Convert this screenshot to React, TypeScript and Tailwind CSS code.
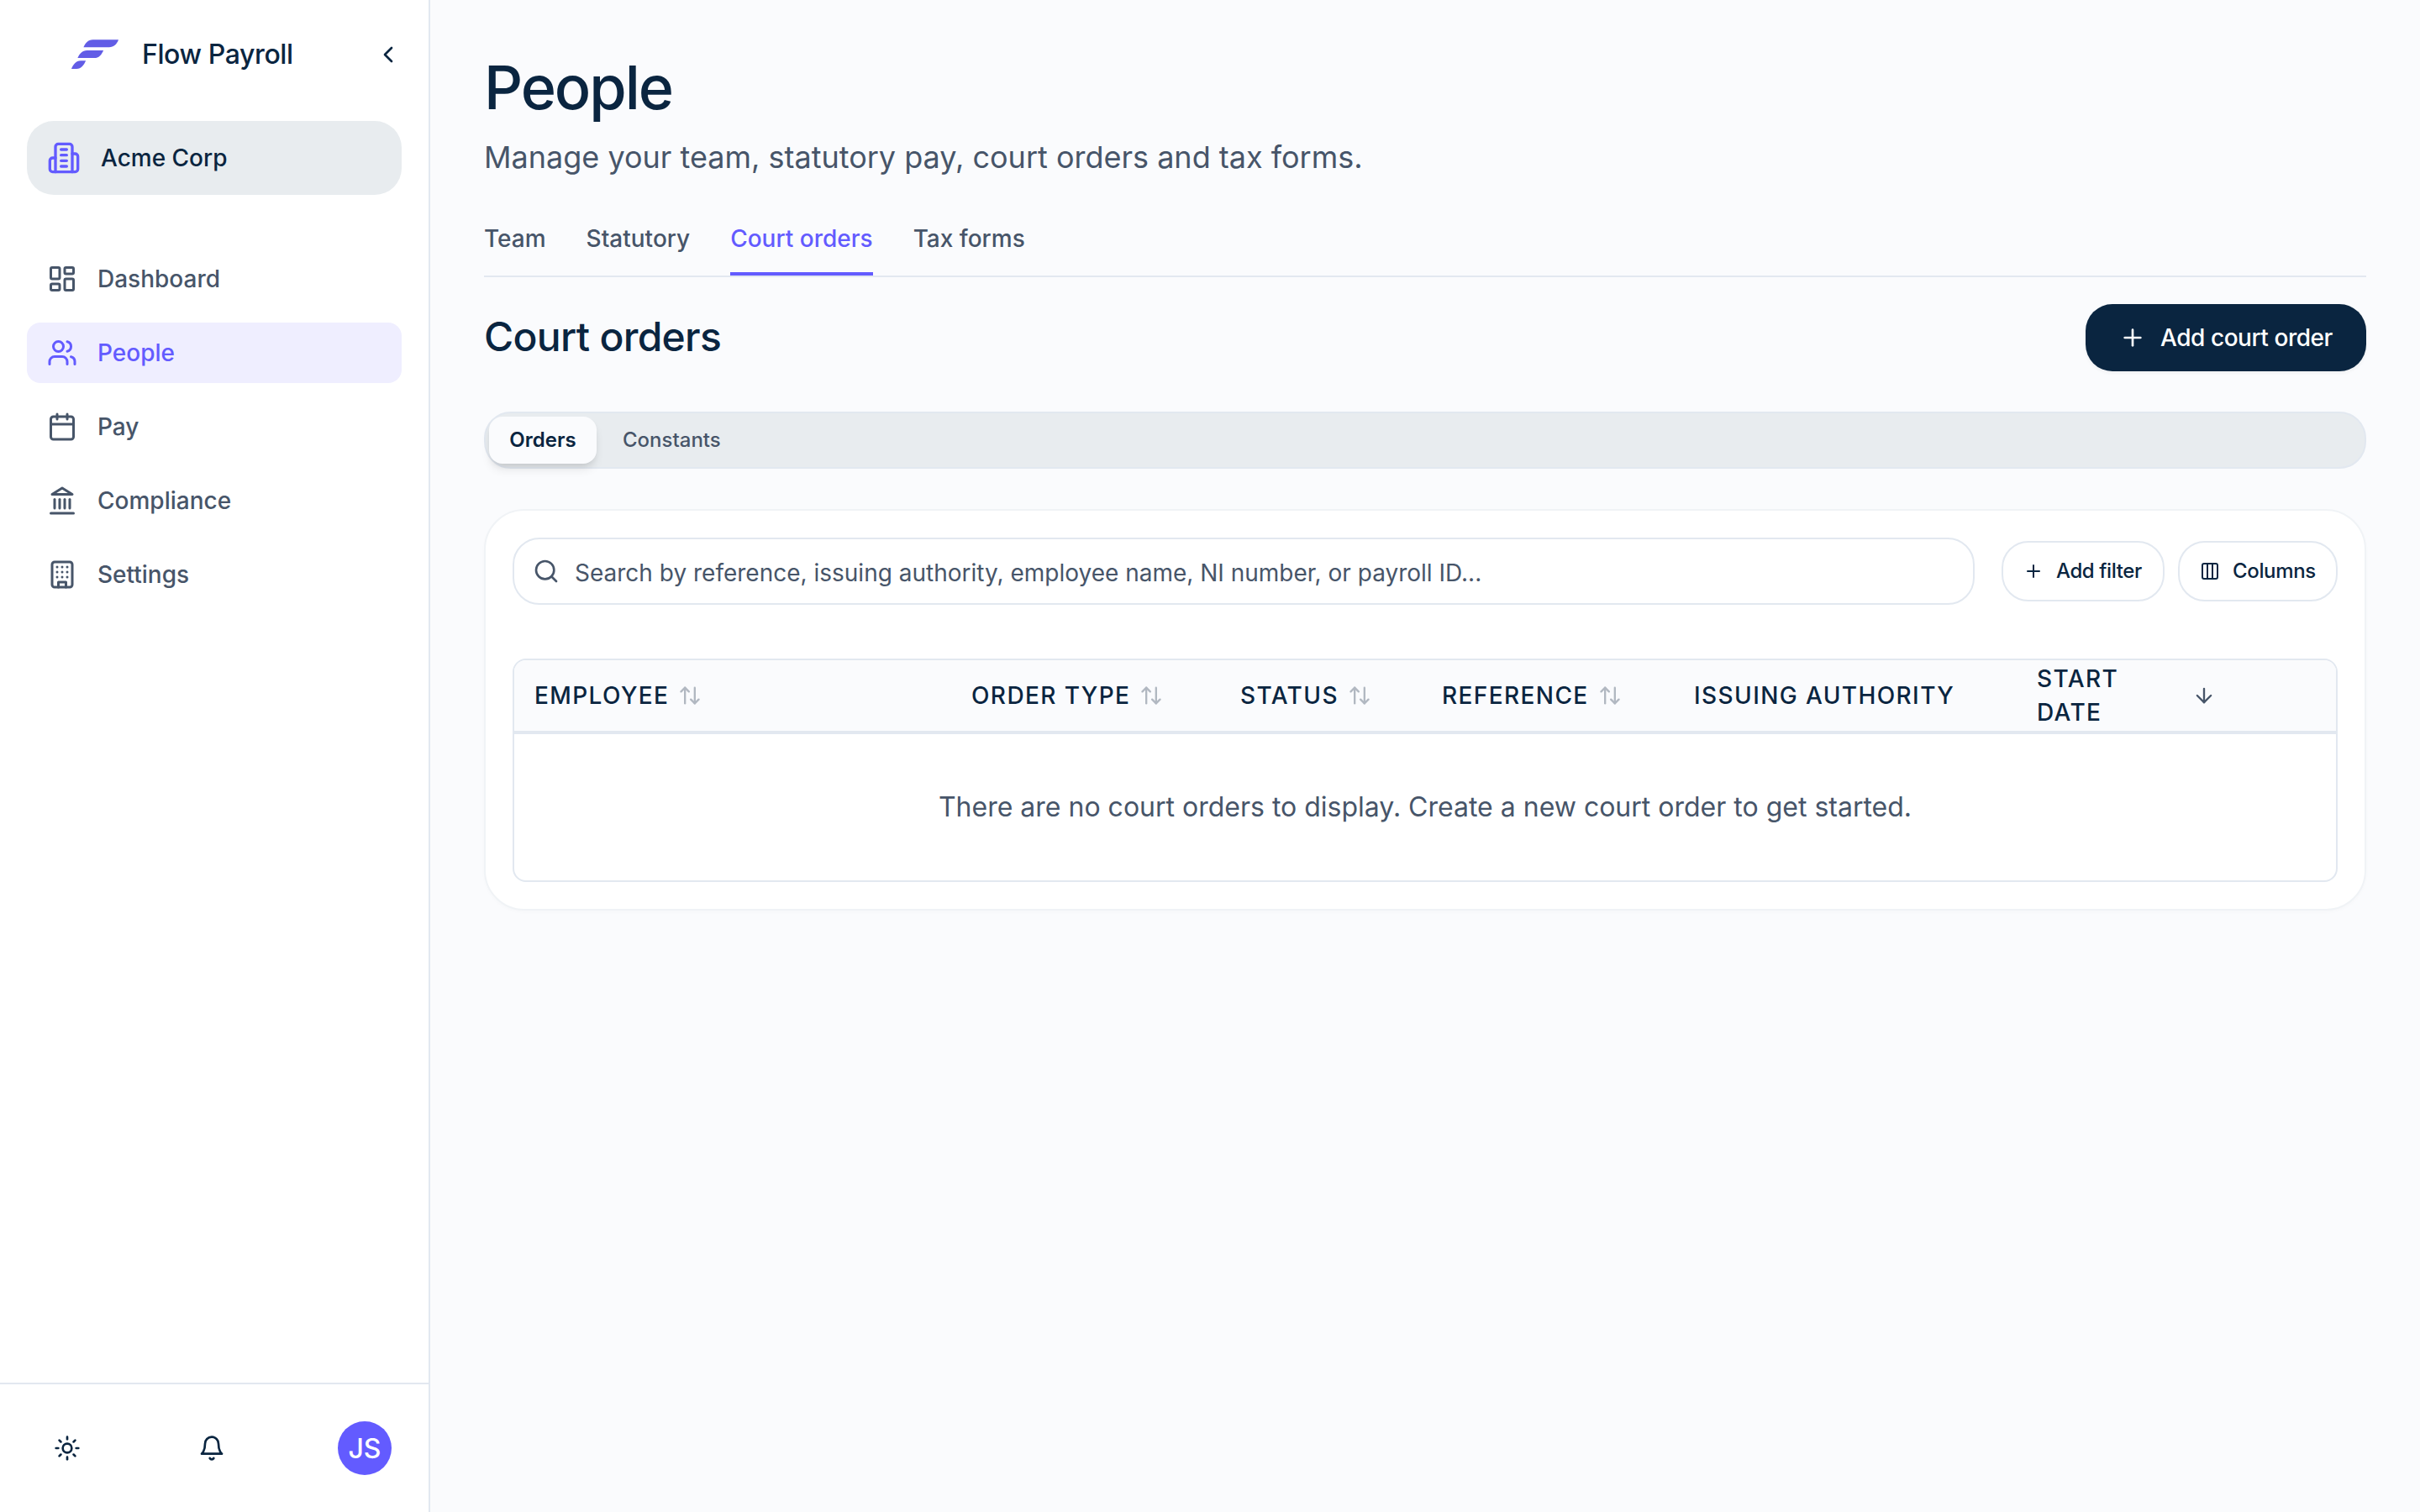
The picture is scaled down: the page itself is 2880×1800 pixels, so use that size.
import React from "react";

type IconProps = { className?: string; children?: React.ReactNode };

function Icon({ className, children }: IconProps) {
  return (
    <svg
      className={className}
      viewBox="0 0 24 24"
      fill="none"
      stroke="currentColor"
      strokeWidth="2"
      strokeLinecap="round"
      strokeLinejoin="round"
    >
      {children}
    </svg>
  );
}

const Logo = () => (
  <svg className="h-9 w-14 shrink-0" viewBox="0 0 56 36" fill="#625de6">
    <path d="M14.4 9.2C16.4 4.2 19.8 0.2 25.5 0.2H56C54.2 5.4 50.2 9.2 44.8 9.2Z" />
    <path d="M7.4 22.1C9.4 17 13 12.9 18.6 12.9H38.1C36 18 32.6 22.1 27 22.1Z" />
    <path d="M0 35C2 30 5.400 25.300 11 25.300H17.100C15 30.300 11.600 35 6 35Z" />
  </svg>
);

const Building2 = () => (
  <Icon className="size-10 text-[#635bff]">
    <path d="M6 22V4a2 2 0 0 1 2-2h8a2 2 0 0 1 2 2v18Z" />
    <path d="M6 12H4a2 2 0 0 0-2 2v6a2 2 0 0 0 2 2h2" />
    <path d="M18 9h2a2 2 0 0 1 2 2v9a2 2 0 0 1-2 2h-2" />
    <path d="M10 6h4" />
    <path d="M10 10h4" />
    <path d="M10 14h4" />
    <path d="M10 18h4" />
  </Icon>
);

const DashboardIcon = () => (
  <Icon className="size-9">
    <rect width="7" height="9" x="3" y="3" rx="1" />
    <rect width="7" height="5" x="14" y="3" rx="1" />
    <rect width="7" height="9" x="14" y="12" rx="1" />
    <rect width="7" height="5" x="3" y="16" rx="1" />
  </Icon>
);

const UsersIcon = () => (
  <Icon className="size-9">
    <path d="M16 21v-2a4 4 0 0 0-4-4H6a4 4 0 0 0-4 4v2" />
    <circle cx="9" cy="7" r="4" />
    <path d="M22 21v-2a4 4 0 0 0-3-3.87" />
    <path d="M16 3.13a4 4 0 0 1 0 7.75" />
  </Icon>
);

const CalendarIcon = () => (
  <Icon className="size-9">
    <path d="M8 2v4" />
    <path d="M16 2v4" />
    <rect width="18" height="18" x="3" y="4" rx="2" />
    <path d="M3 10h18" />
  </Icon>
);

const LandmarkIcon = () => (
  <Icon className="size-9">
    <line x1="3" x2="21" y1="22" y2="22" />
    <line x1="6" x2="6" y1="18" y2="11" />
    <line x1="10" x2="10" y1="18" y2="11" />
    <line x1="14" x2="14" y1="18" y2="11" />
    <line x1="18" x2="18" y1="18" y2="11" />
    <polygon points="12 2 20 7 4 7" />
  </Icon>
);

const BuildingIcon = () => (
  <Icon className="size-9">
    <rect width="16" height="20" x="4" y="2" rx="2" ry="2" />
    <path d="M9 22v-4h6v4" />
    <path d="M8 6h.01" />
    <path d="M16 6h.01" />
    <path d="M12 6h.01" />
    <path d="M12 10h.01" />
    <path d="M12 14h.01" />
    <path d="M16 10h.01" />
    <path d="M16 14h.01" />
    <path d="M8 10h.01" />
    <path d="M8 14h.01" />
  </Icon>
);

const SunIcon = () => (
  <Icon className="size-8">
    <circle cx="12" cy="12" r="4" />
    <path d="M12 2v2" />
    <path d="M12 20v2" />
    <path d="m4.930 4.930 1.410 1.410" />
    <path d="m17.660 17.660 1.410 1.410" />
    <path d="M2 12h2" />
    <path d="M20 12h2" />
    <path d="m6.340 17.660-1.410 1.410" />
    <path d="m19.070 4.930-1.410 1.410" />
  </Icon>
);

const BellIcon = () => (
  <Icon className="size-8">
    <path d="M6 8a6 6 0 0 1 12 0c0 7 3 9 3 9H3s3-2 3-9" />
    <path d="M10.300 21a1.940 1.940 0 0 0 3.400 0" />
  </Icon>
);

const Plus = ({ className }: { className: string }) => (
  <Icon className={className}>
    <path d="M5 12h14" />
    <path d="M12 5v14" />
  </Icon>
);

const ColumnsIcon = () => (
  <Icon className="size-6">
    <rect width="18" height="18" x="3" y="3" rx="2" />
    <path d="M9 3v18" />
    <path d="M15 3v18" />
  </Icon>
);

const SearchIcon = () => (
  <Icon className="size-8 shrink-0">
    <circle cx="11" cy="11" r="8" />
    <path d="m21 21-4.300-4.300" />
  </Icon>
);

const SortIcon = () => (
  <Icon className="size-7 shrink-0 text-[#475569] opacity-40">
    <path d="m21 16-4 4-4-4" />
    <path d="M17 20V4" />
    <path d="m3 8 4-4 4 4" />
    <path d="M7 4v16" />
  </Icon>
);

const ArrowDown = () => (
  <Icon className="size-7 shrink-0 text-[#475569]">
    <path d="M12 5v14" />
    <path d="m19 12-7 7-7-7" />
  </Icon>
);

const navItems = [
  { label: "Dashboard", icon: <DashboardIcon />, active: false },
  { label: "People", icon: <UsersIcon />, active: true },
  { label: "Pay", icon: <CalendarIcon />, active: false },
  { label: "Compliance", icon: <LandmarkIcon />, active: false },
  { label: "Settings", icon: <BuildingIcon />, active: false },
];

function Sidebar() {
  return (
    <aside className="flex w-[512px] shrink-0 flex-col border-r-2 border-[#e2e8f0] bg-white">
      <div className="flex h-32 items-center pt-px pr-8 pl-[85px]">
        <Logo />
        <span className="ml-7 flex-1 pt-px text-[32px] font-medium tracking-[-0.4px]">Flow Payroll</span>
        <Icon className="size-8">
          <path d="m15 18-6-6 6-6" />
        </Icon>
      </div>
      <div className="px-8 pt-4">
        <div className="flex h-[88px] items-center gap-6 rounded-[32px] bg-[#e8ecef] px-6 text-[28px] font-medium">
          <Building2 />
          <span>Acme Corp</span>
        </div>
      </div>
      <nav className="mt-16 flex flex-1 flex-col gap-4 px-8">
        {navItems.map((item) => (
          <a
            key={item.label}
            className={
              item.active
                ? "flex h-[72px] items-center gap-6 rounded-2xl bg-[#efeeff] px-6 text-[28px] font-medium text-[#635bff]"
                : "flex h-[72px] items-center gap-6 rounded-2xl px-6 text-[28px] font-medium text-[#475569]"
            }
          >
            {item.icon}
            <span>{item.label}</span>
          </a>
        ))}
      </nav>
      <div className="flex h-[154px] items-center border-t-2 border-[#e2e8f0] pl-16">
        <SunIcon />
        <div className="ml-[140px]">
          <BellIcon />
        </div>
        <div className="ml-[134px] flex size-16 items-center justify-center rounded-full bg-[#635bff] pt-px text-[32px] font-medium text-white">
          JS
        </div>
      </div>
    </aside>
  );
}

const pageTabs = ["Team", "Statutory", "Court orders", "Tax forms"];

const columns = [
  { label: "Employee", sort: "both" },
  { label: "Order type", sort: "both" },
  { label: "Status", sort: "both" },
  { label: "Reference", sort: "both" },
  { label: "Issuing authority", sort: "none" },
  { label: "Start date", sort: "desc" },
  { label: "", sort: "none" },
];

function OrdersTable() {
  return (
    <div className="mt-16 overflow-hidden rounded-2xl border-2 border-[#e2e8f0]">
      <div className="grid h-[88px] grid-cols-[520px_320px_240px_300px_408px_262px_1fr] items-center border-b-4 border-[#e2e8f0] bg-[#fafbfd]">
        {columns.map((col) => (
          <div
            key={col.label}
            className="flex items-center gap-[11px] pr-5 pl-6 text-[28px] leading-10 font-medium tracking-[0.05em] uppercase"
          >
            {col.sort === "desc" ? (
              <span className="w-[174px] pr-16">{col.label}</span>
            ) : (
              <span>{col.label}</span>
            )}
            {col.sort === "both" && <SortIcon />}
            {col.sort === "desc" && <ArrowDown />}
          </div>
        ))}
      </div>
      <div className="flex h-[174px] items-center justify-center text-[32px] text-[#475569]">
        There are no court orders to display. Create a new court order to get started.
      </div>
    </div>
  );
}

export default function App() {
  return (
    <div className="flex h-[1800px] w-[2880px] overflow-hidden bg-[#fafbfd] font-[Inter,sans-serif] text-[#0a2540]">
      <Sidebar />
      <main className="flex-1 px-16 pt-16">
        <h1 className="text-[72px] leading-[79px] font-medium tracking-[-2.1px]">People</h1>
        <p className="mt-4 text-[36px] leading-14 text-[#475569]">
          Manage your team, statutory pay, court orders and tax forms.
        </p>

        <div className="mt-[25px] flex gap-12 border-b-2 border-[#e2e8f0]">
          {pageTabs.map((tab) => (
            <div
              key={tab}
              className={
                tab === "Court orders"
                  ? "flex h-22 items-center border-b-4 border-[#635bff] pt-1 text-[28px] font-medium text-[#635bff]"
                  : "flex h-22 items-center border-b-4 border-transparent pt-1 text-[28px] font-medium text-[#475569]"
              }
            >
              {tab}
            </div>
          ))}
        </div>

        <div className="mt-8 flex h-20 items-center justify-between">
          <h2 className="pb-[3px] text-[48px] font-medium tracking-[-0.7px]">Court orders</h2>
          <button className="flex h-20 w-[334px] items-center gap-[17px] rounded-[32px] bg-[#0a2540] pl-10 text-[28px] font-medium tracking-[-0.45px] whitespace-nowrap text-white shadow-[0_2px_4px_rgba(0,0,0,0.05)]">
            <Plus className="size-8" />
            Add court order
          </button>
        </div>

        <div className="mt-12 flex h-[68px] items-center gap-2 rounded-[32px] border-2 border-[#e2e8f0] bg-[#e8ecef] p-1 text-[24px]">
          <div className="flex h-14 w-32 items-center justify-center rounded-2xl bg-[#fafbfd] font-semibold shadow-[0_8px_12px_-2px_rgba(0,0,0,0.1),0_4px_8px_-4px_rgba(0,0,0,0.1)]">
            Orders
          </div>
          <div className="px-[23px] font-medium text-[#475569]">Constants</div>
        </div>

        <section className="mt-12 rounded-[48px] border-2 border-[#f0f3f6] bg-white p-8 shadow-[0_2px_4px_rgba(0,0,0,0.02)]">
          <div className="flex items-center">
            <div className="flex h-20 w-[1740px] items-center gap-[18px] rounded-[32px] border-2 border-[#e2e8f0] px-[22px] text-[28px] text-[#475569]">
              <SearchIcon />
              <span className="pt-[3px]">
                Search by reference, issuing authority, employee name, NI number, or payroll ID...
              </span>
            </div>
            <button className="ml-8 flex h-[72px] w-[194px] items-center gap-[15px] rounded-[32px] border-2 border-[#e2e8f0] pl-6 text-[24px] font-medium tracking-[-0.4px] whitespace-nowrap">
              <Plus className="size-6" />
              Add filter
            </button>
            <button className="ml-4 flex h-[72px] w-[190px] items-center gap-[15px] rounded-[32px] border-2 border-[#e2e8f0] pl-6 text-[24px] font-medium tracking-[-0.35px] whitespace-nowrap">
              <ColumnsIcon />
              Columns
            </button>
          </div>
          <OrdersTable />
        </section>
      </main>
    </div>
  );
}
